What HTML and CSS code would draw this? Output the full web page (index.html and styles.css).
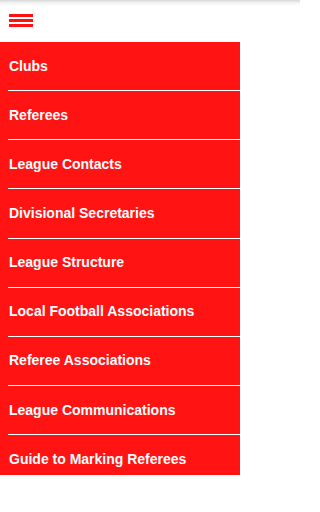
FILE: index.html
```html
<!DOCTYPE html>
<html>
<head>
<meta charset="utf-8">
<link rel="stylesheet" href="styles.css">
</head>
<body>
<header class="topbar">
  <button class="menu-btn" aria-label="Menu">
    <span class="bar"></span><span class="bar"></span><span class="bar"></span>
  </button>
</header>
<nav class="drawer">
  <a class="item">Clubs</a>
  <a class="item">Referees</a>
  <a class="item">League Contacts</a>
  <a class="item">Divisional Secretaries</a>
  <a class="item">League Structure</a>
  <a class="item">Local Football Associations</a>
  <a class="item">Referee Associations</a>
  <a class="item">League Communications</a>
  <a class="item">Guide to Marking Referees</a>
</nav>
</body>
</html>
```
FILE: styles.css
```css
html, body {
  margin: 0;
  padding: 0;
  background: #ffffff;
}
body {
  font-family: "Liberation Sans", Arial, sans-serif;
  width: 300px;
  height: 512px;
  overflow: hidden;
}
.topbar {
  height: 42px;
  background: linear-gradient(to bottom, #d8d8d8 0px, #f4f4f4 3px, #ffffff 6px);
  display: flex;
  align-items: flex-start;
  padding: 14px 0 0 9px;
  box-sizing: border-box;
}
.menu-btn {
  border: 0;
  background: none;
  padding: 0;
  display: flex;
  flex-direction: column;
  gap: 2px;
  width: 24px;
}
.bar {
  display: block;
  height: 3px;
  width: 24px;
  background: #ff1111;
}
.drawer {
  width: 240px;
  height: 433px;
  overflow: hidden;
  background: #ff1313;
  display: flex;
  flex-direction: column;
}
.item {
  flex: none;
  height: 49.15px;
  box-sizing: border-box;
  display: flex;
  align-items: center;
  padding: 0 0 2px 9px;
  color: #ffffff;
  font-weight: bold;
  font-size: 14px;
  background-image: linear-gradient(#ffffff, #ffffff);
  background-repeat: no-repeat;
  background-size: 232px 1px;
  background-position: 8px 100%;
}
```
